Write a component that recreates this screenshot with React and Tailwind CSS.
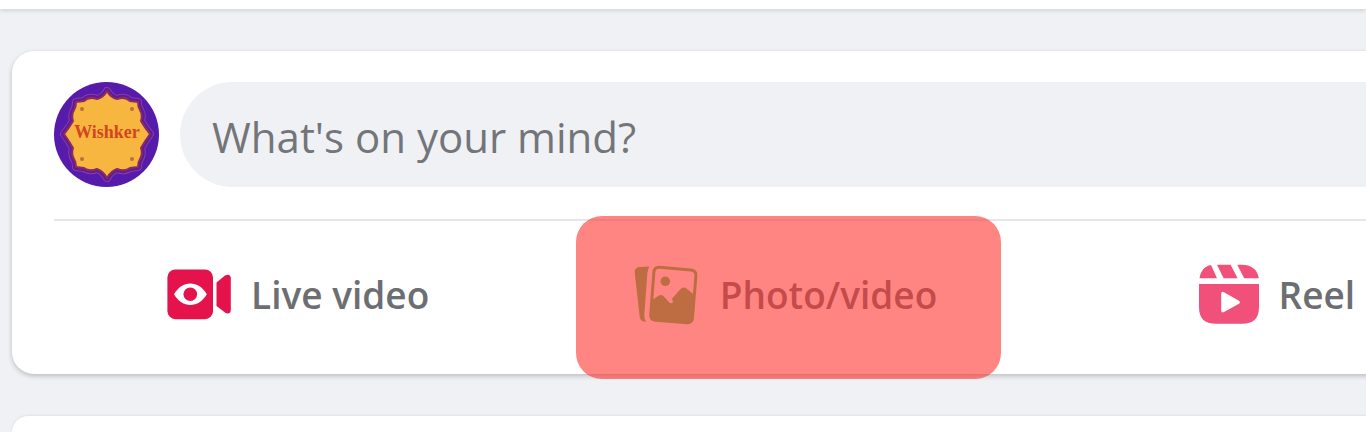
import React from "react";

const ROSETTE =
  "M53 9 Q57 16 63 17 Q71 14 76 19 L84 20 Q84 25 86 28 Q89 33 87 39 Q91 46 96 52 Q91 59 87 66 Q89 72 86 77 Q84 80 84 85 L76 86 Q71 90 63 87 Q57 89 53 96 Q49 89 43 87 Q35 90 30 86 L22 85 Q22 80 20 77 Q17 72 19 66 Q15 59 10 52 Q15 46 19 39 Q17 33 20 28 Q22 25 22 20 L30 19 Q35 14 43 17 Q49 16 53 9Z";

function Avatar() {
  return (
    <svg viewBox="0 0 105 105" className="size-[105px] shrink-0" role="img" aria-label="Wishker">
      <circle cx="52.5" cy="52.5" r="52.5" fill="#561bab" />
      <path d={ROSETTE} fill="none" stroke="#8b3aa6" strokeWidth="8" strokeLinejoin="round" />
      <path d={ROSETTE} fill="none" stroke="#5c1c9c" strokeWidth="6" strokeLinejoin="round" />
      <path d={ROSETTE} fill="#f7b63f" stroke="#8f2b5c" strokeWidth="2" strokeLinejoin="round" />
      <g fill="#b5713a">
        <circle cx="28" cy="27" r="2" />
        <circle cx="78" cy="27" r="2" />
        <circle cx="28" cy="77" r="2" />
        <circle cx="78" cy="77" r="2" />
      </g>
      <text x="53" y="56" textAnchor="middle" fontFamily="Liberation Serif, serif" fontWeight="700" fontSize="18" fill="#d2461f">
        Wishker
      </text>
    </svg>
  );
}

function LiveIcon() {
  return (
    <svg viewBox="0 0 64 64" className="size-16 shrink-0" fill="#e5134b" aria-hidden="true">
      <rect x="0.4" y="6.4" width="45.6" height="49.8" rx="8" />
      <path d="M49.5 19.5 L58 12.6 C60.5 10.8 63.8 11.5 63.8 15 V47 C63.8 50.8 60.5 51.3 58 49.6 L49.5 43Z" />
      <path d="M7 31.3 C11 24.5 17 20.6 23.3 20.6 C29.8 20.6 35.8 24.5 39.8 31.3 C35.8 38.2 29.8 42 23.3 42 C17 42 11 38.2 7 31.3Z" fill="#fff" />
      <circle cx="23.3" cy="31.3" r="6.8" />
    </svg>
  );
}

function PhotoIcon() {
  return (
    <svg viewBox="2 0 64 64" className="size-16 shrink-0 overflow-visible" fill="#5bc45a" aria-hidden="true">
      <path d="M5 4 L15.4 3.4 Q13.8 6 13.4 10 L10.3 52 Q10.2 56 12 58.8 Q6.4 59 5.7 54 L0.7 9.5 Q0.3 5 5 4Z" />
      <path d="M25.5 4.3 L57 6.9 Q62.3 7.5 61.9 12.5 L58.5 55 Q58 60 53 59.7 L21.5 57.2 Q16.3 56.7 16.7 51.5 L19.9 9 Q20.4 4 25.5 4.3Z" fill="none" stroke="#5bc45a" strokeWidth="3" />
      <circle cx="31.3" cy="18.3" r="4.8" />
      <path d="M18 37 L24.5 32.8 Q27 31 29.5 33 L35.5 39.7 Q37.3 41 39 39 Q39.5 37.8 37.6 36.2 L46.5 26 Q49.5 23.2 52.8 25.8 L61 32.5 L59 54 Q58 60 53 59.7 L21.5 57.2 Q16.3 56.7 16.7 51.5Z" />
    </svg>
  );
}

function ReelIcon() {
  return (
    <svg viewBox="0 0 64 64" className="size-16 shrink-0" fill="#f0507a" aria-hidden="true">
      <g transform="translate(2 0)">
        <path d="M2.5 15.2 C3.6 7.5 8 3 14 2 L20 15.2Z" />
        <path d="M20 1.8 H33.6 L40.6 15.2 H26.6Z" />
        <path d="M40.3 1.8 H45 C55 2 60.5 7 61.8 15.2 H47.2Z" />
        <path
          fillRule="evenodd"
          d="M2 21 H62 V44 C62 55.5 56.5 60.8 45 60.8 H19 C7.5 60.8 2 55.5 2 44Z M24.2 30.5 V47.5 Q24.4 50.3 27 49 L42 40.8 Q44 39.2 42 37.7 L27 29.2 Q24.4 28 24.2 30.5Z"
        />
      </g>
    </svg>
  );
}

function Action({ icon, label, highlighted }) {
  return (
    <button type="button" className="relative flex items-center justify-center gap-5 py-[42px]">
      {icon}
      <span className="text-[37px] leading-[50px] font-semibold text-[#6c6e72]">{label}</span>
      {highlighted && (
        <span className="pointer-events-none absolute -top-[5px] -bottom-2.5 right-[30px] left-[34px] rounded-[26px] bg-[#ff3430]/60" />
      )}
    </button>
  );
}

export default function App() {
  return (
    <div className="flex h-screen flex-col gap-[42px] overflow-hidden bg-[#f0f1f5] font-['Open_Sans','Noto_Sans',sans-serif]">
      <header className="h-[9px] shrink-0 bg-white shadow-[0_2px_4px_rgba(0,0,0,0.12)]" />
      <main className="-mr-[195px] ml-3 flex flex-1 flex-col gap-[42px]">
        <section className="rounded-[22px] bg-white px-[42px] pt-[31px] shadow-[0_2px_5px_rgba(0,0,0,0.22)]">
          <div className="flex items-center gap-[21px]">
            <Avatar />
            <input
              type="text"
              aria-label="Create a post"
              placeholder="What's on your mind?"
              className="h-[105px] min-w-0 flex-1 rounded-full bg-[#f0f1f5] px-8 pt-1 text-[42px] text-[#65676b] outline-none placeholder:text-[#737579]"
            />
          </div>
          <div className="mt-8 grid grid-cols-3 border-t-2 border-[#e4e6ea] pb-[5px]">
            <Action icon={<LiveIcon />} label="Live video" />
            <Action icon={<PhotoIcon />} label="Photo/video" highlighted />
            <Action icon={<ReelIcon />} label="Reel" />
          </div>
        </section>
        <section className="flex-1 rounded-t-[22px] bg-white shadow-[0_0_3px_rgba(0,0,0,0.12)]" />
      </main>
    </div>
  );
}
